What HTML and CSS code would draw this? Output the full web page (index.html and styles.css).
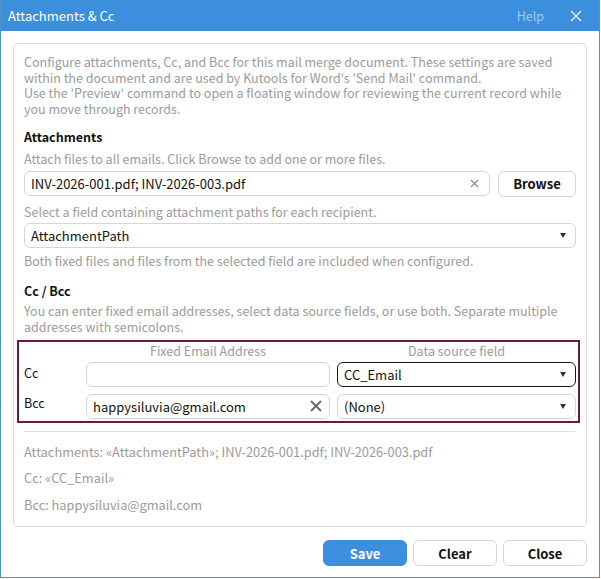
FILE: index.html
```html
<!DOCTYPE html>
<html lang="en">
<head>
<meta charset="utf-8">
<title>Attachments &amp; Cc</title>
<link rel="stylesheet" href="styles.css">
</head>
<body>
<div class="window">
  <div class="titlebar">
    <span class="title">Attachments &amp; Cc</span>
    <span class="help">Help</span>
    <svg class="close-x" width="12" height="12" viewBox="0 0 12 12"><path d="M1 1L11 11M11 1L1 11" stroke="#ffffff" stroke-width="1.1" fill="none"/></svg>
  </div>
  <div class="content">
    <div class="panel">
      <p class="desc">Configure attachments, Cc, and Bcc for this mail merge document. These settings are saved within the document and are used by Kutools for Word's 'Send Mail' command.<br>Use the 'Preview' command to open a floating window for reviewing the current record while you move through records.</p>

      <h2 class="heading h-attach">Attachments</h2>
      <p class="hint hint-tight">Attach files to all emails. Click Browse to add one or more files.</p>
      <div class="file-row">
        <div class="field file-field">
          <span class="value">INV-2026-001.pdf; INV-2026-003.pdf</span>
          <svg class="clear-sm" width="9" height="9" viewBox="0 0 9 9"><path d="M1 1L8 8M8 1L1 8" stroke="#8a8a8a" stroke-width="1.1" fill="none"/></svg>
        </div>
        <button class="btn browse">Browse</button>
      </div>
      <p class="hint hint-select">Select a field containing attachment paths for each recipient.</p>
      <div class="field select">
        <span class="value">AttachmentPath</span>
        <span class="caret"></span>
      </div>
      <p class="hint hint-both">Both fixed files and files from the selected field are included when configured.</p>

      <h2 class="heading h-cc">Cc / Bcc</h2>
      <p class="hint hint-cc">You can enter fixed email addresses, select data source fields, or use both. Separate multiple addresses with semicolons.</p>

      <div class="recipients">
        <span></span>
        <span class="col-head">Fixed Email Address</span>
        <span class="col-head">Data source field</span>

        <span class="row-label">Cc</span>
        <div class="field"></div>
        <div class="field select focused">
          <span class="value">CC_Email</span>
          <span class="caret"></span>
        </div>

        <span class="row-label second">Bcc</span>
        <div class="field second">
          <span class="value">happysiluvia@gmail.com</span>
          <svg class="clear-lg" width="12" height="12" viewBox="0 0 12 12"><path d="M1 1L11 11M11 1L1 11" stroke="#666666" stroke-width="1.8" fill="none"/></svg>
        </div>
        <div class="field select second">
          <span class="value">(None)</span>
          <span class="caret"></span>
        </div>
      </div>

      <div class="divider"></div>
      <div class="summary">
        <p>Attachments: «AttachmentPath»; INV-2026-001.pdf; INV-2026-003.pdf</p>
        <p>Cc: «CC_Email»</p>
        <p>Bcc: happysiluvia@gmail.com</p>
      </div>
    </div>
    <div class="footer">
      <button class="btn primary">Save</button>
      <button class="btn">Clear</button>
      <button class="btn">Close</button>
    </div>
  </div>
</div>
</body>
</html>
```

FILE: styles.css
```css
html, body {
  margin: 0;
  padding: 0;
  background: #ffffff;
}

body {
  font-family: "Noto Sans CJK SC", "Noto Sans", sans-serif;
  font-size: 12.5px;
  color: #111111;
}

p, h2 {
  margin: 0;
}

.window {
  width: 600px;
  height: 578px;
  box-sizing: border-box;
  border: 1px solid #4c94c8;
  border-top: none;
  display: flex;
  flex-direction: column;
}

.titlebar {
  height: 31px;
  flex: none;
  background: #3b8fdc;
  display: flex;
  align-items: center;
  padding: 0 17px 0 7px;
  color: #ffffff;
}

.title {
  font-size: 13px;
  flex: 1;
}

.help {
  color: #a3c8ec;
  font-size: 12.5px;
  margin-right: 26px;
}

.close-x {
  display: block;
}

.content {
  flex: 1;
  display: flex;
  flex-direction: column;
  padding: 12px 12px 0 12px;
}

.panel {
  flex: 1;
  border: 1px solid #dcdcdc;
  border-radius: 5px;
  padding: 10px 10px 0 10px;
}

.desc, .hint, .summary p {
  color: #9b9b9b;
  line-height: 16px;
}

.desc {
  line-height: 15.7px;
}

.heading {
  font-size: 12.5px;
  font-weight: 700;
  line-height: 18px;
  color: #111111;
}

.h-attach { margin-top: 11px; }
.hint-tight { margin-top: 5px; }
.hint-select { margin-top: 7px; }
.hint-both { margin-top: 5px; }
.h-cc { margin-top: 13px; }
.hint-cc { margin-top: 3px; }

.file-row {
  display: flex;
  gap: 8px;
  margin-top: 4px;
}

.field {
  height: 25px;
  box-sizing: border-box;
  border: 1px solid #d6d6d6;
  border-radius: 6px;
  background: #ffffff;
  display: flex;
  align-items: center;
  padding: 0 8px 0 6px;
  color: #111111;
  font-size: 13px;
}

.field .value {
  flex: 1;
  white-space: nowrap;
}

.file-field {
  flex: 1;
}

.select {
  margin-top: 3px;
}

.clear-sm {
  display: block;
  margin-right: 2px;
}

.clear-lg {
  display: block;
  margin-right: -1px;
}

.caret {
  width: 0;
  height: 0;
  border-left: 3.5px solid transparent;
  border-right: 3.5px solid transparent;
  border-top: 5px solid #333333;
  margin-right: 1px;
}

.btn {
  font-family: inherit;
  font-size: 13px;
  font-weight: 700;
  color: #111111;
  background: #ffffff;
  border: 1px solid #d6d6d6;
  border-radius: 6px;
  height: 26px;
  padding: 0;
  cursor: pointer;
}

.browse {
  width: 78px;
  flex: none;
}

.recipients {
  margin-top: 5px;
  margin-left: -7px;
  margin-right: -4px;
  border: 2px solid #6a1a3a;
  padding: 1px 2px 6px 5px;
  display: grid;
  grid-template-columns: 55px 244px 1fr;
  grid-template-rows: 16px 25px 25px;
  column-gap: 7px;
  row-gap: 3px;
}

.recipients .select {
  margin-top: 0;
}

.recipients .second,
.recipients .select.second {
  margin-top: 4px;
}

.col-head {
  color: #9b9b9b;
  line-height: 16px;
  text-align: center;
}

.row-label {
  display: flex;
  align-items: center;
  margin-top: -3px;
}

.row-label.second {
  margin-top: 1px;
}

.focused {
  border-color: #1a1a1a;
}

.divider {
  height: 1px;
  background: #dedede;
  margin-top: 8px;
  margin-right: 1px;
}

.summary {
  margin-top: 7px;
}

.summary p {
  font-size: 12.8px;
  line-height: 26.5px;
}

.footer {
  display: flex;
  justify-content: flex-end;
  gap: 6px;
  padding: 13px 0 11px;
}

.footer .btn {
  width: 84px;
}

.footer .primary {
  background: #3b8fdc;
  border-color: #3b8fdc;
  color: #ffffff;
}
```
